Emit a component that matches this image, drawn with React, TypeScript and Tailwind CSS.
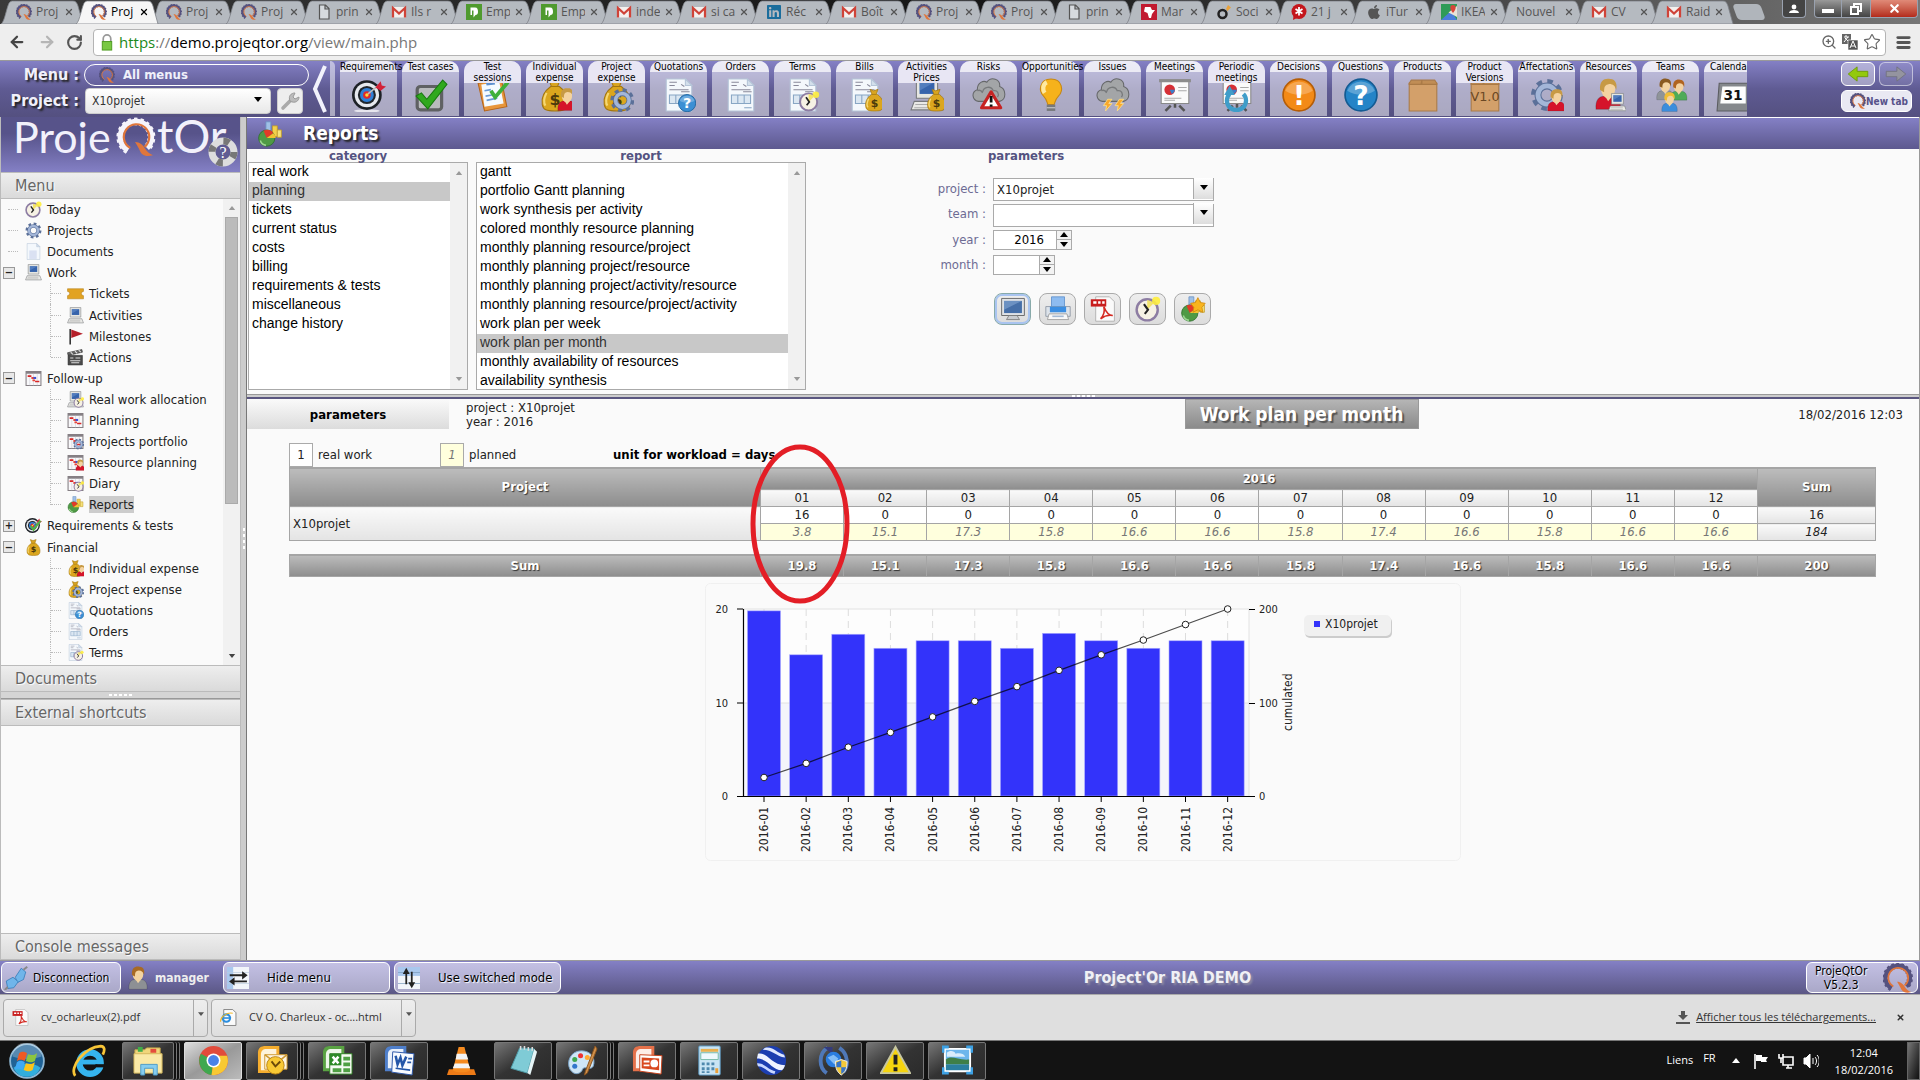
import { useState, type ReactNode } from "react";
import { FaApple, FaLinkedin } from "react-icons/fa";
import { ArrowLeft, ArrowRight, RotateCw, Star, ZoomIn, Menu, X } from "lucide-react";

const SANS = "font-['DejaVu_Sans_Condensed','DejaVu_Sans',sans-serif]";
const UI = "font-['Open_Sans',sans-serif]";

/* ---------- icon parts, all drawn in a 32x32 box ---------- */

const Gear = ({ c = "#a3b6d8", d = "#5b7099" }: { c?: string; d?: string }) => (
  <g>
    <circle cx="16" cy="16" r="12.5" fill="none" stroke={d} strokeWidth="5" strokeDasharray="5 4.8" />
    <circle cx="16" cy="16" r="8.5" fill="none" stroke={d} strokeWidth="6.5" />
    <circle cx="16" cy="16" r="8.5" fill="none" stroke={c} strokeWidth="4.5" />
  </g>
);

const Person = ({ shirt = "#d5142a", hair = "#c79a45" }: { shirt?: string; hair?: string }) => (
  <g>
    <path d="M4 31c-1-9 3-13 8-13h8c5 0 9 4 8 13z" fill={shirt} stroke="#0003" />
    <path d="M13 18l3 5 4-5z" fill="#f2d4a4" />
    <ellipse cx="16" cy="11" rx="7" ry="9" fill="#f4d3a0" />
    <path d="M8 12C7 2 13 0 18 1c6 0 7 6 6 11-1-4-3-6-7-6-4 1-5 2-5 8z" fill={hair} />
  </g>
);

const Clock = () => (
  <g>
    <circle cx="15" cy="17" r="13" fill="#f6f1e4" stroke="#8d7da3" strokeWidth="3" />
    <path d="M15 17V5a12 12 0 0 1 8 4z" fill="#f3e36b" />
    <path d="M11 10l5 7-4 5" fill="none" stroke="#222" strokeWidth="2.6" />
    <circle cx="26" cy="6" r="5" fill="#ffee3d" opacity=".9" />
  </g>
);

const Bag = () => (
  <g>
    <path d="M10 1l5 2 6-2-3 8h-5z" fill="#d9a520" stroke="#a27510" />
    <path d="M12 8h8c7 5 9 11 8 17-1 5-4 6-12 6S5 30 4 25c-1-6 1-12 8-17z" fill="#dba61e" stroke="#a27510" />
    <path d="M8 14c-2 4-3 9-1 12" stroke="#f6d873" strokeWidth="2" fill="none" />
    <text x="16" y="25" fontSize="15" fontWeight="700" textAnchor="middle" fill="#4c3a0c" fontFamily="DejaVu Sans">$</text>
  </g>
);

const Doc = ({ table = true }: { table?: boolean }) => (
  <g>
    <path d="M4 1h18l6 6v24H4z" fill="#f4f8fc" stroke="#b5c5d8" />
    <path d="M22 1v6h6z" fill="#d3dfeb" stroke="#b5c5d8" />
    {table && <path d="M7 4h7M7 7h5M18 6l3 2M7 11h18M18 13h8" stroke="#889" strokeWidth="1" />}
    {table && <path d="M7 16h18v8H7zM13 16v8M19 16v8" fill="#dbe7f2" stroke="#88a6c4" />}
    {table && <path d="M19 28h7" stroke="#88a6c4" />}
  </g>
);

const Pc = () => (
  <g>
    <path d="M6 1h20v18H6z" fill="#e6e6e2" stroke="#77797c" />
    <path d="M9 4h14v11H9z" fill="#3764ac" />
    <path d="M9 4h14L9 12z" fill="#6e96d0" opacity=".5" />
    <path d="M4 22h24l3 8H1z" fill="#e9e9e6" stroke="#77797c" />
    <path d="M5 25h20M4 28h21" stroke="#aaa" />
  </g>
);

const Cloud = () => (
  <g>
    <path d="M6 22c-6-1-7-9-1-11C5 4 11 2 14 4c4-6 13-3 12 4 6 2 7 12 0 14z" fill="#a3a5a7" stroke="#66686a" />
    <path d="M10 13c1-5 8-6 10-1 4-1 6 3 4 6M5 12c2-1 4 0 5 2" fill="none" stroke="#77797b" strokeWidth="1.2" />
  </g>
);

const Board = () => (
  <g>
    <path d="M12 26L7 31M20 26l5 5M16 22v6" stroke="#555" strokeWidth="2.4" />
    <path d="M3 3h26v21H3z" fill="#fafafa" stroke="#888" />
    <path d="M1 1h30v3H1z" fill="#8c8c8c" />
    <circle cx="11" cy="11" r="5" fill="#d62f35" />
    <path d="M11 11h5a5 5 0 0 1-3 4z" fill="#3b7dc8" />
    <path d="M19 9h8M19 12h8M6 19h16M6 21h10" stroke="#aaa" />
  </g>
);

const Plan = () => (
  <g>
    <path d="M2 3h28v26H2z" fill="#f8f8fa" stroke="#857f84" strokeWidth="2" />
    <path d="M2 3h28v4H2z" fill="#857f84" />
    <path d="M9 7v22M16 7v22M23 7v22" stroke="#c9c9d4" />
    <path d="M5 10h7v3H5zM19 20h8v3h-8z" fill="#d82626" />
    <path d="M12 13h5v4h-5zM14 18h5v3h-5z" fill="#e8453a" />
    <path d="M16 13h5v4h-5z" fill="#3a53d8" />
  </g>
);

const Target = () => (
  <g>
    <ellipse cx="14" cy="31" rx="12" ry="1.5" fill="#fff" opacity=".7" />
    <circle cx="14" cy="16" r="14" fill="#1d2126" />
    <circle cx="14" cy="16" r="11.5" fill="#e6e9ee" />
    <circle cx="14" cy="16" r="8.5" fill="#20262c" />
    <circle cx="14" cy="16" r="6.5" fill="#2f7fd6" />
    <circle cx="14" cy="16" r="3.6" fill="#e02a2a" />
    <circle cx="14" cy="16" r="1.6" fill="#ffd83b" />
    <path d="M15 15L25 7" stroke="#bbb" strokeWidth="1.6" />
    <path d="M22 9l5-6 1 4 4 1-5 4z" fill="#d32238" />
  </g>
);

const Carton = () => (
  <g>
    <path d="M3 5h26v26H3z" fill="#d3a06a" stroke="#aa7a46" />
    <path d="M3 5l2-3h10l-1 4H3zM15 2h12l2 3v1H15z" fill="#c08d55" stroke="#aa7a46" />
  </g>
);

const Chart = () => (
  <g>
    <path d="M11 1h6v14h-6z" fill="#9fc0e6" stroke="#6d93c4" />
    <path d="M19 6h6v13h-6z" fill="#f3d14c" stroke="#c29d28" />
    <path d="M25 11h5v9h-5z" fill="#f6e27a" stroke="#c29d28" />
    <circle cx="12" cy="21" r="10" fill="#4f9a45" stroke="#2e6f2c" />
    <path d="M12 21l-4-9c4-2 9-2 12 3z" fill="#e33a28" />
    <path d="M12 21l8-6c2 1 3 4 3 6z" fill="#f2c230" />
    <path d="M4 24a9 9 0 0 0 7 6" stroke="#9fd693" strokeWidth="2" fill="none" />
  </g>
);

const Ball = ({ fill, edge, ch }: { fill: string; edge: string; ch: string }) => (
  <g>
    <circle cx="16" cy="16" r="15" fill={fill} stroke={edge} strokeWidth="1.6" />
    <path d="M3 12a14 14 0 0 1 26 0c-8 5-18 5-26 0z" fill="#fff" opacity=".25" />
    <text x="16" y="25" fontSize="25" fontWeight="700" textAnchor="middle" fill="#fff" fontFamily="DejaVu Sans">{ch}</text>
  </g>
);

const Small = ({ children, x = 15, y = 15, k = 0.54 }: { children: ReactNode; x?: number; y?: number; k?: number }) => (
  <g transform={`translate(${x} ${y}) scale(${k})`}>{children}</g>
);

const QMark = ({ light = false }: { light?: boolean }) => (
  <g>
    <path d="M9 27A13 13 0 1 1 25 25" fill="none" stroke={light ? "#f5f4fb" : "#55527f"} strokeWidth="4.5" />
    <path d="M9 27A13 13 0 1 1 25 25" fill="none" stroke={light ? "#f5f4fb" : "#55527f"} strokeWidth="6.5" strokeDasharray="2.4 2.2" />
    <path d="M11 25A10.6 10.6 0 1 1 23 24" fill="none" stroke="#e0763b" strokeWidth="1.8" />
    <path d="M15 20c4 0 7 3 8 5 2 3 4 5 7 6-7 2-10-1-11-4-1-2-2-4-4-7z" fill="#e0763b" />
  </g>
);

const Gmail = () => (
  <g>
    <path d="M2 6h28v21H2z" fill="#f3f0ee" />
    <path d="M4 27V8l12 11L28 8v19" fill="none" stroke="#cf4338" strokeWidth="4.5" />
  </g>
);

const ICONS: Record<string, ReactNode> = {
  q: <QMark />,
  gmail: <Gmail />,
  page: <path d="M7 2h12l7 7v21H7zM18 2v8h8" fill="#d6dade" stroke="#555" strokeWidth="2.4" />,
  green: <g><path d="M0 0h32v32H0z" fill="#4f9a2e" /><path d="M9 7h9c5 0 6 4 6 9 0 4-2 6-5 6l-4 5V13h-3v9H9z" fill="#fff" /></g>,
  africa: <g><path d="M0 0h32v32H0z" fill="#c11a30" /><path d="M8 6h11l3 6h6l-6 8-2 8h-4l-3-10-7-3z" fill="#fff" /></g>,
  soci: <g><circle cx="13" cy="20" r="8" fill="none" stroke="#222" strokeWidth="5" /><path d="M20 10l4-8 6 5-7 7z" fill="#e8a23c" /></g>,
  red: <g><circle cx="16" cy="15" r="15" fill="#c4161c" /><path d="M5 24l-1 8 8-4z" fill="#c4161c" /><path d="M16 6v17M9 10l14 9M23 10L9 19" stroke="#fff" strokeWidth="3.5" /></g>,
  maps: <g><path d="M0 0h32v32H0z" fill="#2f9b58" /><path d="M0 32L20 14l12 18z" fill="#4a7ddc" /><path d="M15 17L32 4v22z" fill="#e8e3d8" /><path d="M24 18c-8-9-6-16 0-16s8 7 0 16z" fill="#d8453a" /></g>,
  target: <Target />,
  check: <g><rect x="3" y="8" width="23" height="22" rx="3" fill="#b9bbbd" stroke="#5f6163" strokeWidth="3" /><path d="M2 17l5-3 5 6L27 2l4 4-18 23z" fill="#30a91e" stroke="#187a10" /></g>,
  clipboard: <g><path d="M2 5l22-3 5 25-21 4z" fill="#e8963b" stroke="#b4641a" /><path d="M5 6l17-2 4 20-18 3z" fill="#f4faff" /><path d="M9 3l8-1 1 4-8 1z" fill="#5c8fcf" /><path d="M8 12l6-1M9 17l6-1M10 21l10-2" stroke="#6a9ad4" strokeWidth="1.6" /><path d="M14 12l4 6L30 4" fill="none" stroke="#3eb03a" strokeWidth="3.6" /></g>,
  bag: <Bag />,
  bagUser: <g><Bag /><Small x={16} y={9} k={0.7}><Person /></Small></g>,
  bagGear: <g><Bag /><Small x={9} y={9} k={0.75}><Gear /></Small></g>,
  doc: <Doc />,
  docs: <g><Doc table={false} /><path d="M8 14h14v16H8z" fill="#cfd7ee" opacity=".7" /></g>,
  docQ: <g><Doc /><Small><Ball fill="#3b8fd4" edge="#21659f" ch="?" /></Small></g>,
  docClock: <g><Doc /><Small x={12} y={12} k={0.62}><Clock /></Small></g>,
  docBag: <g><Doc /><Small x={14} y={10} k={0.68}><Bag /></Small></g>,
  pc: <Pc />,
  pcBag: <g><Pc /><Small x={14} y={10} k={0.68}><Bag /></Small></g>,
  pcClock: <g><Pc /><Small x={12} y={11} k={0.65}><Clock /></Small></g>,
  risk: <g><Cloud /><path d="M18 13l9 15H9z" fill="#fff" stroke="#c62323" strokeWidth="3" strokeLinejoin="round" /><path d="M18 17v6M18 25v2" stroke="#111" strokeWidth="2.6" /></g>,
  bulb: <g><path d="M16 1c11 0 12 11 7 16-3 3-3 5-4 8h-6c-1-3-1-5-4-8C4 12 5 1 16 1z" fill="#f6b21b" stroke="#c78712" /><path d="M12 4c-4 2-4 7-2 10" stroke="#ffe9a0" strokeWidth="4" fill="none" /><path d="M12 25h8v6h-8z" fill="#77797c" /><path d="M12 28h8" stroke="#ccc" /></g>,
  storm: <g><Cloud /><path d="M11 20l-4 6h3l-1 5 6-7h-3l3-4zM22 20l-4 6h3l-1 5 6-7h-3l3-4z" fill="#f9a72b" stroke="#fbe08a" strokeWidth=".8" /></g>,
  board: <Board />,
  boardCycle: <g><Board /><path d="M9 15a9 9 0 1 0 13 0" fill="none" stroke="#3f9dc9" strokeWidth="4" /><path d="M4 16l5-9 5 9z" fill="#3f9dc9" /></g>,
  excl: <Ball fill="#f38a17" edge="#b45d07" ch="!" />,
  question: <Ball fill="#2484c7" edge="#145b92" ch="?" />,
  box: <Carton />,
  boxV: <g><Carton /><text x="16" y="22" fontSize="12" textAnchor="middle" fill="#6b4824" fontFamily="DejaVu Sans">V1.0</text></g>,
  gear: <Gear />,
  gearUser: <g><Gear /><Small x={14} y={10} k={0.68}><Person /></Small></g>,
  userPc: <g><Small x={0} y={0} k={0.95}><Person /></Small><Small x={15} y={14} k={0.56}><Pc /></Small></g>,
  team: <g><Small x={0} y={0} k={0.66}><Person shirt="#8f9499" hair="#8a5a20" /></Small><Small x={13} y={1} k={0.64}><Person shirt="#4eab58" hair="#b0641f" /></Small><Small x={5} y={13} k={0.6}><Person shirt="#3c8ddc" hair="#f0bd35" /></Small></g>,
  calendar: <g><path d="M3 5h27l2 26H1z" fill="#85888c" stroke="#5b5d60" /><path d="M6 8h22v16H4z" fill="#fdfdfd" /><text x="16" y="21" fontSize="13" fontWeight="700" textAnchor="middle" fill="#111" fontFamily="DejaVu Sans">31</text></g>,
  clock: <Clock />,
  ticket: <path d="M1 7h30v5a4 4 0 0 0 0 8v6H1v-6a4 4 0 0 0 0-8z" fill="#e2a322" stroke="#b27d12" />,
  flag: <g><path d="M6 2v29" stroke="#333" strokeWidth="3" /><path d="M8 3l22 8-22 8z" fill="#b5202a" /></g>,
  clapper: <g><path d="M2 12h27v18H2z" fill="#4b4b4b" stroke="#222" /><path d="M1 7l27-6 1 5-27 6z" fill="#666" stroke="#222" /><path d="M7 6l4 4M15 4l4 4M22 2l4 4M6 17h6M16 17h9M6 22h19M8 26h15" stroke="#ddd" strokeWidth="2" /></g>,
  plan: <Plan />,
  planGear: <g><Plan /><Small x={11} y={10} k={0.68}><Gear /></Small></g>,
  planUser: <g><Plan /><Small x={14} y={10} k={0.68}><Person /></Small></g>,
  planClock: <g><Plan /><Small x={12} y={11} k={0.65}><Clock /></Small></g>,
  chart: <Chart />,
  chartStar: <g><Chart /><path d="M22 2l3 6 6 1-4 5 1 6-6-3-6 3 1-6-4-5 6-1z" fill="#f9b51d" stroke="#d18a0d" /></g>,
  targetCheck: <g><Target /><path d="M11 17l5 7L29 7" fill="none" stroke="#56b043" strokeWidth="4" /></g>,
  screen: <g><path d="M2 3h28v21H2z" fill="#dfe2e6" stroke="#555" /><path d="M5 6h22v15H5z" fill="#466fa8" /><path d="M5 6h22L5 17z" fill="#86a8d4" opacity=".6" /><path d="M11 24h10l3 5H8z" fill="#c9ccd0" stroke="#777" /></g>,
  printer: <g><path d="M8 1h16v13H8z" fill="#8ebcf0" stroke="#5c8fcb" /><path d="M1 13h30v12H1z" fill="#dde3ea" stroke="#8791a0" /><path d="M6 13h20v7H6z" fill="#3b8ee2" /><path d="M5 22h22l2 7H3z" fill="#f8f8f8" stroke="#999" /><path d="M9 25h14" stroke="#a3b9d4" strokeWidth="2" /></g>,
  pdf: <g><path d="M7 1h17l6 6v24H7z" fill="#fafafa" stroke="#a9a9a9" /><path d="M1 4h19v9H1z" fill="#c81e1e" /><path d="M13 28c5-5 5-11 4-15 3 8 6 11 11 11-6-1-11 1-15 4z" fill="none" stroke="#d42a22" strokeWidth="2" /><path d="M4 8h4M10 8h3M15 8h3" stroke="#fff" strokeWidth="3" /></g>,
  plug: <g><path d="M15 15l8-12 6 5-3 10-8 4z" fill="#70b5ea" stroke="#2f77b5" /><path d="M26 5l5-4" stroke="#888" strokeWidth="2.6" /><path d="M3 20l9-5 7 6-6 8-8 1z" fill="#70b5ea" stroke="#2f77b5" /><path d="M5 28l-4 4" stroke="#888" strokeWidth="2.6" /></g>,
  manager: <Person shirt="#8d9094" hair="#a86a24" />,
  hmove: <g><path d="M0 0h32v32H0z" fill="#f2f5fa" /><path d="M0 0h9v32H0z" fill="#a9c8ee" /><path d="M0 8h32M0 24h32" stroke="#bcd" /><path d="M4 12h20M9 21h20" stroke="#222" strokeWidth="2.6" /><path d="M22 6l8 6-8 6zM11 15l-8 6 8 6z" fill="#222" /></g>,
  vmove: <g><path d="M0 0h32v32H0z" fill="#f2f5fa" /><path d="M0 0h32v13H0z" fill="#a9c8ee" /><path d="M0 8h32M0 24h32" stroke="#79b" /><path d="M12 7v18M20 7v18" stroke="#222" strokeWidth="2.6" /><path d="M7 10l5-9 5 9zM15 22l5 9 5-9z" fill="#222" /></g>,
  htmlFile: <g><path d="M7 1h17l6 6v24H7z" fill="#fbfbfb" stroke="#777" strokeWidth="1.6" /><circle cx="12" cy="17" r="7" fill="none" stroke="#2c8ede" strokeWidth="4" /><path d="M7 17h12" stroke="#2c8ede" strokeWidth="3" /><path d="M1 24C0 15 14 5 24 8" stroke="#f2b928" strokeWidth="2" fill="none" /></g>,
  win: <g><circle cx="16" cy="16" r="15" fill="#1f6296" stroke="#8fb8d4" strokeWidth="1.6" /><path d="M4 22a13 13 0 0 0 24 0c-7-5-17-5-24 0z" fill="#37c2ef" opacity=".8" /><path d="M3 12a13 13 0 0 1 26 0c-8 3-18 3-26 0z" fill="#fff" opacity=".25" /><path d="M9 9c3-2 5-1 7 0l-2 7c-2-1-4-2-7 0z" fill="#ee5a24" /><path d="M17 10c3 1 5 1 8-1l-2 7c-3 2-5 1-8 0z" fill="#8cc63e" /><path d="M7 17c3-2 5-1 7 0l-2 7c-2-1-4-2-7 0z" fill="#3fa9f5" /><path d="M15 18c3 1 5 1 8-1l-2 7c-3 2-5 1-8 0z" fill="#fcc419" /></g>,
  ie: <g><circle cx="17" cy="18" r="10" fill="none" stroke="#35b4ee" strokeWidth="6" /><path d="M9 17h18" stroke="#35b4ee" strokeWidth="4.5" /><path d="M22 22h9v-3h-9z" fill="#131313" /><path d="M3 30C-3 22 12 3 27 2c4 0 4 4 2 8" stroke="#f8c537" strokeWidth="2.6" fill="none" /></g>,
  folder: <g><path d="M2 5h10l2-2h14v24H2z" fill="#f1d67b" stroke="#c9a94a" /><path d="M5 2h5v5H5z" fill="#3fae49" /><path d="M18 4h6v4h-6z" fill="#e44d3c" /><path d="M1 9h29v20H1z" fill="#fae9a6" stroke="#d3b65c" /><path d="M8 31V20h17v11h-4v-7h-9v7z" fill="#85cdf0" stroke="#4d9cc8" /></g>,
  chrome: <g><circle cx="16" cy="16" r="15" fill="#e14b3b" /><path d="M16 16L3 9a15 15 0 0 0 11 22z" fill="#3fa84f" /><path d="M16 16l-2 15A15 15 0 0 0 30 11H16z" fill="#f8c932" /><circle cx="16" cy="16" r="7.2" fill="#fff" /><circle cx="16" cy="16" r="5.6" fill="#4a82e8" /></g>,
  outlook: <g><path d="M1 29V8c0-5 3-7 8-7h14v28z" fill="#f5ad2e" /><path d="M4 26V10c0-4 2-6 6-6h10v22z" fill="#fdf3dc" /><path d="M8 10h23v15H8z" fill="#fdf6e3" stroke="#cf9a34" /><path d="M8 10l12 9 11-9" fill="none" stroke="#cf9a34" strokeWidth="1.6" /><circle cx="19" cy="21" r="9" fill="#f8c934" stroke="#b98314" /><path d="M15 17l4 5 5-5" stroke="#6a4a09" strokeWidth="2" fill="none" /></g>,
  excel: <g><path d="M1 27V8c0-5 3-7 8-7h14v26z" fill="#5aa343" /><path d="M4 24V10c0-4 2-6 6-6h10v20z" fill="#eef7ea" /><path d="M8 9h23v21H8z" fill="#f6fbf3" stroke="#2d7d22" /><path d="M8 9l12 0v12H8z" fill="#2d8a27" /><path d="M11 12l6 7M17 12l-6 7" stroke="#fff" strokeWidth="2.6" /><path d="M22 12h7v4h-7zM22 18h7v4h-7zM22 24h7v4h-7zM11 24h9v4h-9z" fill="#4fa044" /></g>,
  word: <g><path d="M1 27V8c0-5 3-7 8-7h14v26z" fill="#4f7fcb" /><path d="M4 24V10c0-4 2-6 6-6h10v20z" fill="#eaf1fb" /><path d="M9 7l22 2-2 22-21-3z" fill="#f8fbff" stroke="#2d58a8" /><path d="M12 11l2 9 3-7 2 8 4-9" fill="none" stroke="#2456a8" strokeWidth="2.6" /><path d="M25 14h4M24 18h4M12 24l15 2" stroke="#2456a8" strokeWidth="1.8" /></g>,
  vlc: <g><path d="M3 25h26l2 6H1z" fill="#ee7b17" /><path d="M13 2h6l6 24c-4 3-14 3-18 0z" fill="#f58a1e" /><path d="M11 9h10l2 6H10zM9 19h14l2 5H7z" fill="#f3f3f3" /></g>,
  notepad: <g><path d="M12 3l15 1-7 25L3 24z" fill="#7fcbd6" stroke="#4f9ca8" /><path d="M27 4l3 3-7 24-3-2z" fill="#e6f5f7" /><path d="M13 1v4M17 1v4M21 2v4M25 2v4" stroke="#ddd" strokeWidth="1.6" /></g>,
  paint: <g><path d="M15 6C4 6-1 17 3 25c5 8 12 4 13 0 2-4 8 2 11-3C30 14 25 6 15 6z" fill="#cfe6f6" stroke="#7aa4c8" /><circle cx="8" cy="15" r="2.6" fill="#3fa84f" /><circle cx="14" cy="11" r="2.6" fill="#e33" /><circle cx="21" cy="13" r="2.6" fill="#fa3" /><circle cx="8" cy="22" r="2.6" fill="#37c" /><path d="M29 1l2 3-10 25-3 2 1-4z" fill="#d0904a" stroke="#8a5520" /></g>,
  ppt: <g><path d="M1 27V8c0-5 3-7 8-7h14v26z" fill="#e5714a" /><path d="M4 24V10c0-4 2-6 6-6h10v20z" fill="#fdeee8" /><path d="M8 10l23 1-1 19-22-3z" fill="#fff" stroke="#c9431c" /><path d="M10 13l18 1v12l-18-2z" fill="#d9481f" /><circle cx="23" cy="19" r="4" fill="#fff" /><path d="M12 17h6M12 21h6" stroke="#fff" strokeWidth="2" /></g>,
  calc: <g><rect x="5" y="1" width="22" height="30" rx="1" fill="#c9e4f4" stroke="#5e9cc4" /><path d="M7 4h18v3H7z" fill="#eab04e" /><path d="M7 8h18v7H7z" fill="#eef8fd" stroke="#7ba" /><path d="M8 18h3v3H8zM13 18h3v3h-3zM18 18h3v3h-3zM8 23h3v3H8zM13 23h3v3h-3zM18 23h3v3h-3zM8 27h3v2H8zM13 27h3v2h-3z" fill="#4f88ad" /><path d="M22 24h3v5h-3z" fill="#e9a03a" /></g>,
  earth: <g><circle cx="16" cy="16" r="15" fill="#1c3eb0" /><path d="M2 9c10-2 14 12 28 12-1 3-2 4-3 5C16 26 13 14 1 14z" fill="#f0f4ff" /><path d="M9 3c9-2 13 6 20 7l1 3C21 12 17 5 7 5z" fill="#dfe8ff" /><path d="M1 19c7-1 12 7 19 8l-1 3C12 28 8 22 2 22z" fill="#c9d8ff" /></g>,
  sync: <g><path d="M10 3C1 8 0 23 9 29M22 3c9 6 10 18 4 25" fill="none" stroke="#4f78b8" strokeWidth="4" /><path d="M6 2h9v8z" fill="#343b7c" /><circle cx="16" cy="15" r="8" fill="#2b7de0" /><path d="M10 13l6-3 5 4-4 6z" fill="#a9d7ff" opacity=".7" /><path d="M18 17l6-2 6 2c0 8-2 11-6 14-4-3-6-6-6-14z" fill="#f4c938" stroke="#eee" /><path d="M24 16v7h5c-1 4-3 6-5 7v-7h-5c0-2 0-4 0-5z" fill="#3674c9" /></g>,
  warn: <g><path d="M16 2l15 27H1z" fill="#f6d50f" stroke="#c7c7a0" strokeWidth="2" /><path d="M16 10v10M16 23v4" stroke="#222" strokeWidth="4" /></g>,
  picture: <g><path d="M3 4h26v23H3z" fill="#cfeafd" stroke="#fff" strokeWidth="2" /><path d="M4 5h24v11H4z" fill="#6db6ec" /><path d="M5 8c3-3 8-2 9 1 5-1 8 0 10 3H5z" fill="#f4faff" opacity=".8" /><path d="M4 15c6-5 12 1 24 0v5H4z" fill="#3f7f47" /><path d="M4 20h24v6H4z" fill="#2b7f9f" /><path d="M1 8V2h6M25 2h6v6M31 23v6h-6M7 29H1v-6" fill="none" stroke="#3da1e4" strokeWidth="3" /></g>,
};

const Ic = ({ n, className = "size-4" }: { n: string; className?: string }) => (
  <svg viewBox="0 0 32 32" className={`shrink-0 ${className}`} aria-hidden="true">{ICONS[n]}</svg>
);

/* ---------- data ---------- */

const tabs: [string, string][] = [
  ["q", "Proj"], ["q", "Proj"], ["q", "Proj"], ["q", "Proj"], ["page", "prin"], ["gmail", "Ils r"],
  ["green", "Emp"], ["green", "Emp"], ["gmail", "inde"], ["gmail", "si ca"], ["linkedin", "Réc"], ["gmail", "Boît"],
  ["q", "Proj"], ["q", "Proj"], ["page", "prin"], ["africa", "Mar"], ["soci", "Soci"], ["red", "21 j"],
  ["apple", "iTur"], ["maps", "IKEA"], ["", "Nouvel"], ["gmail", "CV"], ["gmail", "Raid"],
];

const tiles: [string, string][] = [
  ["Requirements", "target"], ["Test cases", "check"], ["Test\nsessions", "clipboard"], ["Individual\nexpense", "bagUser"],
  ["Project\nexpense", "bagGear"], ["Quotations", "docQ"], ["Orders", "doc"], ["Terms", "docClock"], ["Bills", "docBag"],
  ["Activities\nPrices", "pcBag"], ["Risks", "risk"], ["Opportunities", "bulb"], ["Issues", "storm"], ["Meetings", "board"],
  ["Periodic\nmeetings", "boardCycle"], ["Decisions", "excl"], ["Questions", "question"], ["Products", "box"],
  ["Product\nVersions", "boxV"], ["Affectations", "gearUser"], ["Resources", "userPc"], ["Teams", "team"], ["Calendars", "calendar"],
];

// level 0 = root entry, level 1 = child entry
const tree: { label: string; icon: string; level: number; sign?: string; last?: boolean }[] = [
  { label: "Today", icon: "clock", level: 0 },
  { label: "Projects", icon: "gear", level: 0 },
  { label: "Documents", icon: "docs", level: 0 },
  { label: "Work", icon: "pc", level: 0, sign: "-" },
  { label: "Tickets", icon: "ticket", level: 1 },
  { label: "Activities", icon: "pc", level: 1 },
  { label: "Milestones", icon: "flag", level: 1 },
  { label: "Actions", icon: "clapper", level: 1, last: true },
  { label: "Follow-up", icon: "plan", level: 0, sign: "-" },
  { label: "Real work allocation", icon: "pcClock", level: 1 },
  { label: "Planning", icon: "plan", level: 1 },
  { label: "Projects portfolio", icon: "planGear", level: 1 },
  { label: "Resource planning", icon: "planUser", level: 1 },
  { label: "Diary", icon: "planClock", level: 1 },
  { label: "Reports", icon: "chart", level: 1, last: true },
  { label: "Requirements & tests", icon: "targetCheck", level: 0, sign: "+" },
  { label: "Financial", icon: "bag", level: 0, sign: "-" },
  { label: "Individual expense", icon: "bagUser", level: 1 },
  { label: "Project expense", icon: "bagGear", level: 1 },
  { label: "Quotations", icon: "docQ", level: 1 },
  { label: "Orders", icon: "doc", level: 1 },
  { label: "Terms", icon: "docClock", level: 1 },
];

const categories = ["real work", "planning", "tickets", "current status", "costs", "billing", "requirements & tests", "miscellaneous", "change history"];
const reports = [
  "gantt", "portfolio Gantt planning", "work synthesis per activity", "colored monthly resource planning",
  "monthly planning resource/project", "monthly planning project/resource", "monthly planning project/activity/resource",
  "monthly planning resource/project/activity", "work plan per week", "work plan per month",
  "monthly availability of resources", "availability synthesis",
];

const months = ["01", "02", "03", "04", "05", "06", "07", "08", "09", "10", "11", "12"];
const real = [16, 0, 0, 0, 0, 0, 0, 0, 0, 0, 0, 0];
const planned = [3.8, 15.1, 17.3, 15.8, 16.6, 16.6, 15.8, 17.4, 16.6, 15.8, 16.6, 16.6];
const totals = planned.map((p, i) => p + real[i]);

/* ---------- browser ---------- */

function TabStrip() {
  return (
    <div className={`flex h-6 overflow-hidden bg-linear-to-r from-[#3a3a3a] via-[#151515] to-[#777] text-xs text-[#555] ${UI}`}>
      {tabs.map(([icon, label], i) => (
        <div key={i} className={`relative flex w-[75px] shrink-0 items-center pl-4 ${i === 1 ? "z-10 text-black" : ""}`}>
          <svg viewBox="0 0 84 24" className="absolute top-0 left-0 h-6 w-[84px]" aria-hidden="true">
            <path d="M1 24C5 22 7 4 10 2c1-1 2-1 3-1h60c3 0 4 2 5 5l5 18z" fill={i === 1 ? "#f6f6f6" : "#b5bac0"} stroke="#7d8288" strokeWidth=".8" />
          </svg>
          <a href="#" className="relative flex items-center">
            {icon === "linkedin" && <FaLinkedin className="mr-1 size-4 text-[#1a6d9c]" />}
            {icon === "apple" && <FaApple className="mr-1 size-4" />}
            {ICONS[icon] && <Ic n={icon} className="mr-1 size-4" />}
            <span className={`overflow-hidden whitespace-nowrap ${icon ? "w-6" : "w-11"}`}>{label}</span>
          </a>
          <button aria-label="Close tab" className="relative ml-1"><X size={10} strokeWidth={3} /></button>
        </div>
      ))}
      <div className="mt-1 ml-[10px] h-4 w-7 shrink-0 -skew-x-[-20deg] rounded-sm bg-[#b0b5bb]" />
      <div className="ml-auto flex h-[18px] shrink-0 text-white">
        <button aria-label="User" className="mr-2 flex w-6 items-center justify-center rounded-b border border-t-0 border-gray-400 bg-[#444]">
          <svg viewBox="0 0 12 12" className="size-3" fill="#fff"><circle cx="6" cy="4" r="2.4" /><path d="M1 10c0-4 10-4 10 0z" /></svg>
        </button>
        <button aria-label="Minimize" className="flex w-7 items-end justify-center rounded-bl border border-t-0 border-gray-400 bg-linear-to-b from-[#999] to-[#444] pb-1"><span className="h-1 w-3 bg-white" /></button>
        <button aria-label="Restore" className="flex w-7 items-center justify-center border-b border-gray-400 bg-linear-to-b from-[#999] to-[#444]">
          <svg viewBox="0 0 12 12" className="size-3" fill="none" stroke="#fff" strokeWidth="2"><path d="M4 3V1h7v7H9M1 4h7v7H1z" /></svg>
        </button>
        <button aria-label="Close" className="mr-[2px] flex w-12 items-center justify-center rounded-br border border-t-0 border-gray-400 bg-linear-to-b from-[#e08a78] to-[#b3291a]"><X size={13} strokeWidth={4} /></button>
      </div>
    </div>
  );
}

function AddressBar() {
  return (
    <div className="flex h-[37px] items-center border-b border-[#999] bg-[#eee] pr-2 pl-2 text-[#555]">
      <button aria-label="Back" className="mr-3 text-[#444]"><ArrowLeft size={18} strokeWidth={3} /></button>
      <button aria-label="Forward" className="mr-[10px] text-[#b5b5b5]"><ArrowRight size={18} strokeWidth={3} /></button>
      <button aria-label="Reload" className="mr-[10px]"><RotateCw size={17} strokeWidth={3} /></button>
      <div className={`flex h-[27px] flex-1 items-center rounded-sm border border-[#b4b4b4] bg-white pr-1 pl-[5px] text-[15px] text-[#777] ${UI}`}>
        <svg viewBox="0 0 16 18" className="mr-1 h-[17px] w-4" aria-hidden="true">
          <path d="M4 9V5a4 4 0 0 1 8 0v4" fill="none" stroke="#999" strokeWidth="1.8" />
          <rect x="3" y="8" width="10" height="9" fill="#79c843" stroke="#4c9a1f" />
        </svg>
        <span className="text-[#1b8a1b]">https</span>://<span className="text-black">demo.projeqtor.org</span>/view/main.php
        <div className="ml-auto flex items-center gap-[5px] text-[#666]">
          <ZoomIn size={16} />
          <svg viewBox="0 0 16 16" className="size-4" aria-hidden="true">
            <path d="M0 0h9v10H0z" fill="#666" /><path d="M2 3h5M4 1v2M6 3L2 8M3 4l4 4" stroke="#fff" fill="none" />
            <path d="M6 6h10v10H6z" fill="#555" stroke="#fff" strokeWidth=".6" /><path d="M8 14l3-7 3 7M9 12h4" stroke="#fff" fill="none" />
          </svg>
          <Star size={18} strokeWidth={1.5} />
        </div>
      </div>
      <button aria-label="Browser menu" className="ml-[9px]"><Menu size={17} strokeWidth={4} /></button>
    </div>
  );
}

/* ---------- application header ---------- */

function MenuBar() {
  return (
    <header className="flex h-14 items-start bg-linear-to-b from-[#8480c5] via-[#5f5b93] to-[#545080]">
      <div className="flex w-[335px] shrink-0">
        <div className="w-[310px] font-bold text-[#f0f0fa]">
          <div className="mt-[2px] flex items-center">
            <span className="w-[79px] text-right text-base leading-6 whitespace-nowrap [text-shadow:2px_2px_2px_#222]">Menu :</span>
            <button className="ml-[5px] flex h-[22px] w-[225px] items-center rounded-full border border-white pl-[14px] text-[13px]">
              <Ic n="q" className="mr-2 size-4" />All menus
            </button>
          </div>
          <div className="mt-px flex items-center">
            <label htmlFor="project" className="w-[79px] text-right text-base leading-6 whitespace-nowrap [text-shadow:2px_2px_2px_#222]">Project :</label>
            <div className="relative ml-[6px]">
              <select id="project" className="h-[26px] w-[186px] appearance-none rounded border border-[#ccc] bg-linear-to-b from-white to-[#e8e8e8] pl-[6px] text-xs font-normal text-[#333]">
                <option>X10projet</option>
              </select>
              <svg viewBox="0 0 8 5" className="pointer-events-none absolute top-[9px] right-[9px] h-[5px] w-2"><path d="M0 0h8L4 5z" /></svg>
            </div>
            <button aria-label="Settings" className="ml-[6px] flex size-[26px] items-center justify-center rounded border border-[#ccc] bg-[#eee]">
              <svg viewBox="0 0 20 20" className="size-5"><path d="M3 17L11 9" stroke="#aaa" strokeWidth="3.6" strokeLinecap="round" /><path d="M10 10C8 5 11 2 15 2l-2 4 2 2 4-2c0 4-4 7-9 4z" fill="#bbb" stroke="#999" /></svg>
            </button>
          </div>
        </div>
        <button aria-label="Scroll left" className="mt-[1px]">
          <svg viewBox="0 0 18 50" className="h-[50px] w-[18px]"><path d="M15 2L5 25l10 23" fill="none" stroke="#f2f2fc" strokeWidth="4" /></svg>
        </button>
        <div className="ml-[2px] h-[55px] w-[5px] rounded-tr-lg bg-white/50" />
      </div>
      <nav className="ml-[5px] flex min-w-0 flex-1 gap-[5px] overflow-hidden">
        {tiles.map(([label, icon]) => {
          const two = label.includes("\n");
          return (
            <a href="#" key={label} className="flex h-[55px] w-[57px] shrink-0 flex-col items-center rounded-t-[10px] bg-white/50">
              <span className={`relative w-full rounded-t-[10px] text-center text-[10px] leading-[11px] whitespace-pre text-black ${two ? "z-10 h-[22px] bg-[#e8e6f4]" : "h-[11px] bg-white/70"}`}>{label}</span>
              <Ic n={icon} className={two ? "-mt-[5px] size-[34px]" : "mt-[6px] size-[34px]"} />
            </a>
          );
        })}
      </nav>
      <div className="ml-[94px] flex w-[79px] shrink-0 flex-wrap gap-x-1 gap-y-1 pt-[1px]">
        <button aria-label="Previous" className="flex h-6 w-[34px] items-center justify-center rounded-md border border-white bg-white/40">
          <svg viewBox="0 0 24 18" className="h-4 w-6"><path d="M1 9l10-8v5h12v6H11v5z" fill="#93c90e" stroke="#6d9a08" /></svg>
        </button>
        <button aria-label="Next" className="flex h-6 w-[34px] items-center justify-center rounded-md border border-white/50 bg-white/10">
          <svg viewBox="0 0 24 18" className="h-4 w-6"><path d="M23 9L13 1v5H1v6h12v5z" fill="#94949f" stroke="#72727e" /></svg>
        </button>
        <button className="flex h-[22px] w-[71px] items-center rounded-md border border-white bg-[#e9e9f3] pl-2 text-[10px] font-bold whitespace-nowrap text-[#56528a]">
          <Ic n="q" className="size-4" />New tab
        </button>
      </div>
    </header>
  );
}

/* ---------- left column ---------- */

const PaneTitle = ({ children }: { children: ReactNode }) => (
  <h2 className="h-[27px] border-y border-[#bbb] bg-linear-to-b from-[#eee] to-[#dadada] pl-[14px] text-base leading-[26px] text-[#666] [text-shadow:1px_1px_1px_#fff]">{children}</h2>
);

function Sidebar() {
  return (
    <aside className="flex w-[241px] shrink-0 flex-col border-x border-[#bbb]">
      <div className="relative h-[55px] bg-linear-to-b from-[#57538a] from-30% to-[#8480c5]">
        <svg viewBox="0 0 240 55" className="h-[55px] w-[240px]" role="img" aria-label="ProjeQtOr">
          <g fontFamily="Lato" fontSize="43" fill="#f2f1fb">
            <text x="12" y="36">Proje</text>
            <text x="156" y="36" fontSize="46">tOr</text>
          </g>
          <g transform="translate(116 1) scale(1.2)"><QMark light /></g>
          <circle cx="222" cy="35" r="11" fill="#5f5b93" stroke="#ddd" strokeWidth="7" />
          <circle cx="222" cy="35" r="11" fill="none" stroke="#777" strokeWidth="7" strokeDasharray="6 11.3" />
          <text x="222" y="41" fontSize="16" textAnchor="middle" fill="#fff" fontFamily="Liberation Serif">?</text>
        </svg>
      </div>
      <PaneTitle>Menu</PaneTitle>
      <div className="flex h-[466px] text-[13px] text-[#222]">
        <ul className="flex min-w-0 flex-1 flex-col pb-[2px] leading-[17px]">
          {tree.map((t) => (
            <li key={t.label + t.icon} className="relative flex flex-1 items-center">
              {t.level === 1 && <span className={`absolute top-0 left-[49px] border-l border-dotted border-[#bbb] ${t.last ? "h-1/2" : "h-full"}`} />}
              {t.level === 1 && <span className="ml-[50px] w-[10px] border-t border-dotted border-[#bbb]" />}
              {t.level === 0 && !t.sign && <span className="mr-[7px] ml-[7px] w-[10px] border-t border-dotted border-[#bbb]" />}
              {t.sign && <button aria-label={`Toggle ${t.label}`} className="mr-[10px] ml-[2px] flex size-3 items-center justify-center border border-[#999] bg-[#e8e8e8] text-[11px] leading-none font-bold">{t.sign === "-" ? "−" : "+"}</button>}
              <Ic n={t.icon} className={t.level ? "ml-[6px] size-[17px]" : "size-[17px]"} />
              <a href="#" className={`ml-[5px] whitespace-nowrap ${t.label === "Reports" ? "bg-[#ccc]" : ""}`}>{t.label}</a>
            </li>
          ))}
        </ul>
        <div className="flex w-[17px] flex-col items-center bg-[#f1f1f1]">
          <svg viewBox="0 0 8 5" className="my-[7px] h-1 w-2"><path d="M0 5h8L4 0z" fill="#999" /></svg>
          <div className="h-[287px] w-[13px] border border-[#aaa] bg-[#bbb]" />
          <svg viewBox="0 0 8 5" className="mt-auto mb-[7px] h-1 w-2"><path d="M0 0h8L4 5z" fill="#444" /></svg>
        </div>
      </div>
      <PaneTitle>Documents</PaneTitle>
      <div className="flex h-[7px] items-center justify-center gap-[2px] border-b border-[#999] bg-[#d5d5d5]">
        {[0, 1, 2, 3, 4].map((i) => <span key={i} className="h-[2px] w-[3px] bg-white" />)}
      </div>
      <PaneTitle>External shortcuts</PaneTitle>
      <div className="flex-1 bg-[#fafafa]" />
      <PaneTitle>Console messages</PaneTitle>
    </aside>
  );
}

/* ---------- report selection ---------- */

function ListBox({ label, items, value, width }: { label: string; items: string[]; value: string; width: string }) {
  const [current, setCurrent] = useState(value);
  return (
    <div className={width}>
      <label htmlFor={label} className="block h-[13px] text-center text-[13px] leading-[14px] font-bold text-[#545381]">{label}</label>
      <div className="flex h-[228px] border border-[#aaa] bg-white">
        <select id={label} size={12} value={current} onChange={(e) => setCurrent(e.target.value)} className="min-w-0 flex-1 appearance-none overflow-hidden font-['Liberation_Sans',sans-serif] text-sm text-black outline-none">
          {items.map((it) => <option key={it} className="h-[19px] px-[3px] py-0 leading-[19px] checked:bg-[#c8c8c8] checked:text-[#333]">{it}</option>)}
        </select>
        <div className="flex w-[17px] flex-col items-center justify-between bg-[#f1f1f1] py-[8px]">
          <svg viewBox="0 0 8 5" className="h-1 w-2"><path d="M0 5h8L4 0z" fill="#999" /></svg>
          <svg viewBox="0 0 8 5" className="h-1 w-2"><path d="M0 0h8L4 5z" fill="#999" /></svg>
        </div>
      </div>
    </div>
  );
}

const Combo = ({ id, value }: { id: string; value: string }) => (
  <div className="relative w-[221px]">
    <select id={id} className="h-[23px] w-full appearance-none border border-[#aaa] bg-white pl-[3px] text-[13px] text-[#222]"><option>{value}</option></select>
    <span className="pointer-events-none absolute top-px right-px flex h-[21px] w-5 justify-center border-l border-[#aaa] bg-linear-to-b from-white to-[#ddd] pt-[7px]">
      <svg viewBox="0 0 8 5" className="h-[5px] w-2"><path d="M0 0h8L4 5z" /></svg>
    </span>
  </div>
);

const Spinner = ({ id, value, width }: { id: string; value: string; width: string }) => (
  <div className={`flex h-5 border border-[#aaa] bg-white ${width}`}>
    <input id={id} defaultValue={value} className="min-w-0 flex-1 pr-3 text-right text-[13px] text-black outline-none" />
    <div className="flex w-[15px] flex-col border-l border-[#aaa] bg-[#f3f3f3]">
      <button type="button" aria-label={`Increase ${id}`} className="flex flex-1 items-center justify-center border-b border-[#aaa]"><svg viewBox="0 0 8 5" className="h-[5px] w-2"><path d="M0 5h8L4 0z" /></svg></button>
      <button type="button" aria-label={`Decrease ${id}`} className="flex flex-1 items-center justify-center"><svg viewBox="0 0 8 5" className="h-[5px] w-2"><path d="M0 0h8L4 5z" /></svg></button>
    </div>
  </div>
);

function ReportPicker() {
  const lab = "w-[93px] pr-[7px] text-right text-[13px] leading-5 text-[#6d6b94]";
  return (
    <section className="flex h-[245px] bg-[#fafafa] pl-[1px]">
      <ListBox label="category" items={categories} value="planning" width="w-[220px]" />
      <ListBox label="report" items={reports} value="work plan per month" width="ml-2 w-[330px]" />
      <form className="ml-[94px] w-[320px]">
        <h3 className="h-[13px] pl-[88px] text-[13px] leading-[14px] font-bold text-[#545381]">parameters</h3>
        <div className="mt-[15px] flex items-center"><label htmlFor="p-project" className={lab}>project :</label><Combo id="p-project" value="X10projet" /></div>
        <div className="mt-px flex items-center"><label htmlFor="team" className={lab}>team :</label><Combo id="team" value="" /></div>
        <div className="mt-[3px] flex items-center"><label htmlFor="year" className={lab}>year :</label><Spinner id="year" value="2016" width="w-[79px]" /></div>
        <div className="mt-[5px] flex items-center"><label htmlFor="month" className={lab}>month :</label><Spinner id="month" value="" width="w-[62px]" /></div>
        <div className="mt-[18px] ml-[94px] flex gap-2">
          {["screen", "printer", "pdf", "clock", "chartStar"].map((n, i) => (
            <button key={n} type="button" aria-label={n} className={`flex h-8 w-[37px] shrink-0 items-center justify-center rounded-lg border bg-linear-to-b from-[#eee] to-[#dcdcdc] ${i === 0 ? "border-[#8aa] ring-2 ring-[#a9c4f0] ring-inset" : "border-[#aaa]"}`}>
              <Ic n={n} className="size-[26px]" />
            </button>
          ))}
        </div>
      </form>
    </section>
  );
}

/* ---------- report ---------- */

function WorkTable() {
  const head = "border border-[#a5a5a5] bg-linear-to-b from-[#bdbdbd] to-[#8d8d8d] font-bold text-white [text-shadow:1px_1px_1px_#333]";
  const light = "border border-[#a5a5a5] bg-linear-to-b from-[#fafafa] to-[#e4e4e4]";
  return (
    <table className="w-full table-fixed border-collapse text-center text-[13px] leading-4 text-[#222]">
      <colgroup>
        <col className="w-[471px]" />
        {months.map((m) => <col key={m} />)}
        <col className="w-[118px]" />
      </colgroup>
      <thead>
        <tr className="h-[22px]">
          <th rowSpan={2} className={head}>Project</th>
          <th colSpan={12} className={head}>2016</th>
          <th rowSpan={2} className={head}>Sum</th>
        </tr>
        <tr className="h-[17px]">
          {months.map((m, i) => (
            <td key={m} className={`relative ${light}`}>
              {m}
              {i === 0 && (
                <svg viewBox="0 0 100 162" className="pointer-events-none absolute -top-[47px] -left-[11px] z-10 h-[162px] w-[100px] max-w-none" aria-hidden="true">
                  <ellipse cx="50" cy="81" rx="47" ry="77" fill="none" stroke="#e31e26" strokeWidth="5" />
                </svg>
              )}
            </td>
          ))}
        </tr>
      </thead>
      <tbody>
        <tr className="h-[17px]">
          <td rowSpan={2} className={`pl-[3px] text-left ${light}`}>X10projet</td>
          {real.map((v, i) => <td key={i} className="border border-[#a5a5a5] bg-white">{v}</td>)}
          <td className={light}>16</td>
        </tr>
        <tr className="h-[17px] italic">
          {planned.map((v, i) => <td key={i} className="border border-[#a5a5a5] bg-[#ffffdd] text-[#777]">{v}</td>)}
          <td className={light}>184</td>
        </tr>
        <tr className="h-[14px]"><td colSpan={14} /></tr>
        <tr className="h-[22px]">
          <th className={head}>Sum</th>
          {totals.map((v, i) => <th key={i} className={head}>{v.toFixed(1)}</th>)}
          <th className={head}>200</th>
        </tr>
      </tbody>
    </table>
  );
}

function WorkChart() {
  const base = 213;
  let sum = 0;
  const pts = totals.map((v, i) => {
    sum += v;
    return [59 + i * 42.15, base - sum * 0.935];
  });
  return (
    <svg viewBox="0 0 756 278" className="mx-auto mt-[6px] h-[278px] w-[756px]" role="img" aria-label="Work plan chart" fontFamily="DejaVu Sans Condensed, DejaVu Sans" fontSize="12" fill="#222">
      <rect x=".5" y=".5" width="755" height="277" rx="5" fill="#fafafa" stroke="#f0f0f0" />
      <rect x="38" y="26" width="506" height="94" fill="#fdfdfd" />
      <rect x="38" y="120" width="506" height="93" fill="#f4f5fa" />
      <path d="M38 26h506v187M38 120h506" fill="none" stroke="#e2e2e2" />
      {pts.map(([x]) => <path key={x} d={`M${x} 26v187`} stroke="#ddd" strokeDasharray="7 5" />)}
      {totals.map((v, i) => (
        <rect key={i} x={42.5 + i * 42.15} y={base - v * 9.35} width="33" height={v * 9.35} fill="#3333fa" stroke="#a9a9ff" strokeWidth=".6" />
      ))}
      <path d="M38.500 26v187M32 26h6M32 120h6M32 213.500h518M544 26.500h6M544 120.500h6" stroke="#000" strokeWidth="1.2" fill="none" />
      <polyline points={pts.map((p) => p.join(",")).join(" ")} fill="none" stroke="#000" strokeOpacity=".7" strokeWidth="1.2" />
      {pts.map(([x, y], i) => (
        <g key={i}>
          <circle cx={x} cy={y} r="3.3" fill="#fff" stroke="#222" />
          <path d={`M${x} 213v6`} stroke="#000" />
          <text transform={`translate(${x + 4} 269) rotate(-90)`}>{`2016-${months[i]}`}</text>
        </g>
      ))}
      <g fontSize="11">
        <g textAnchor="end"><text x="23" y="30">20</text><text x="23" y="124">10</text><text x="23" y="217">0</text></g>
        <text x="554" y="30">200</text><text x="554" y="124">100</text><text x="554" y="217">0</text>
      </g>
      <text transform="translate(587 148) rotate(-90)">cumulated</text>
      <rect x="600" y="34" width="87" height="21" rx="5" fill="#ccc" />
      <rect x="599" y="32" width="87" height="21" rx="5" fill="#f0f0f0" />
      <rect x="609" y="38" width="6" height="6" fill="#3333fa" />
      <text x="620" y="45">X10projet</text>
    </svg>
  );
}

function Report() {
  return (
    <section className="flex-1 bg-[#fafafa]">
      <div className="flex h-[30px] text-[13px] text-[#222]">
        <div className="w-[202px] bg-linear-to-b from-[#fafafa] to-[#dcdcdc] text-center leading-[31px] font-bold text-black">parameters</div>
        <p className="w-[400px] pt-[2px] pl-[17px] leading-[14px]">project : X10projet<br />year : 2016</p>
        <div className="flex flex-1 justify-center">
          <h2 className="h-[30px] w-[234px] border border-[#999] bg-linear-to-b from-[#b5b5b5] to-[#8b8b8b] text-center text-[19px] leading-[29px] font-bold whitespace-nowrap text-white [text-shadow:2px_2px_1px_#555]">Work plan per month</h2>
        </div>
        <p className="w-[165px] shrink-0 pr-4 text-right leading-[31px]">18/02/2016 12:03</p>
      </div>
      <div className="pt-[14px] pr-[43px] pl-[42px]">
        <div className="flex h-6 items-center text-[13px] text-[#222]">
          <span className="mr-[5px] flex size-6 items-center justify-center border border-[#aaa] bg-white">1</span>
          <span className="w-[122px]">real work</span>
          <span className="mr-[5px] flex size-6 items-center justify-center border border-[#aaa] bg-[#ffffdd] text-[#777] italic">1</span>
          <span className="w-[144px]">planned</span>
          <span className="font-bold text-black">unit for workload = days</span>
        </div>
        <WorkTable />
        <WorkChart />
      </div>
    </section>
  );
}

/* ---------- bottom ---------- */

function StatusBar() {
  const btn = "flex h-[31px] items-center rounded-md border border-white bg-linear-to-b from-[#c3c0e4] to-[#aaa8c8] text-black [text-shadow:1px_1px_1px_#fff]";
  return (
    <footer className="flex h-[34px] items-center border-b border-[#aaa] bg-linear-to-b from-[#8480c5] to-[#5b5785] pl-[1px]">
      <button className={`${btn} w-[120px] pl-[2px] text-xs`}><Ic n="plug" className="mr-[5px] size-6" />Disconnection</button>
      <Ic n="manager" className="mx-[5px] size-6" />
      <span className="w-[68px] text-xs font-bold text-[#eee]">manager</span>
      <button className={`${btn} w-[167px] pl-[3px] text-[13px]`}><Ic n="hmove" className="size-[22px]" /><span className="pl-[18px]">Hide menu</span></button>
      <button className={`${btn} ml-1 w-[167px] pl-[3px] text-[13px]`}><Ic n="vmove" className="size-[22px]" /><span className="pl-[18px]">Use switched mode</span></button>
      <strong className="flex-1 pr-[58px] pl-[26px] text-center text-base text-[#f0f0f5] [text-shadow:2px_2px_2px_#aaa8]">Project'Or RIA DEMO</strong>
      <button className={`${btn} mr-[2px] w-[112px] justify-between pr-1 pl-2 text-xs leading-[14px]`}><span>ProjeQtOr<br />V5.2.3</span><Ic n="q" className="size-[30px]" /></button>
    </footer>
  );
}

function Downloads() {
  return (
    <div className={`flex h-[45px] items-center bg-[#dfdfdf] pl-[3px] text-[11px] text-[#333] ${UI}`}>
      {[["pdf", "cv_ocharleux(2).pdf"], ["htmlFile", "CV O. Charleux - oc....html"]].map(([icon, name]) => (
        <div key={name} className="mr-[3px] flex h-[38px] w-[205px] rounded-sm border border-[#aaa] bg-linear-to-b from-[#eee] to-[#dedede]">
          <button className="flex flex-1 items-center pl-2"><Ic n={icon} className="mr-3 size-[17px]" />{name}</button>
          <button aria-label="Options" className="flex w-[14px] justify-center border-l border-[#aaa] pt-3"><svg viewBox="0 0 8 5" className="h-[4px] w-[6px]"><path d="M0 0h8L4 5z" fill="#555" /></svg></button>
        </div>
      ))}
      <div className="mr-[15px] ml-auto flex items-center">
        <svg viewBox="0 0 14 13" className="mr-[6px] h-[13px] w-[14px]"><path d="M5 0h4v4h3L7 9 2 4h3zM0 11h14v2H0z" fill="#555" /></svg>
        <a href="#" className="underline">Afficher tous les téléchargements...</a>
        <button aria-label="Close downloads" className="ml-5"><X size={9} strokeWidth={4} /></button>
      </div>
    </div>
  );
}

const apps: [string, string][] = [
  ["folder", "stack"], ["chrome", "active"], ["outlook", "stack"], ["excel", "open"], ["word", "open"], ["vlc", ""], ["notepad", "open"],
  ["paint", "stack"], ["ppt", "open"], ["calc", "open"], ["earth", "open"], ["sync", "open"], ["warn", "open"], ["picture", "open"],
];

function Taskbar() {
  const look: Record<string, string> = {
    "": "w-[58px]",
    open: "w-[58px] border border-[#777] bg-linear-to-br from-[#777] via-[#333] to-[#2a2a2a]",
    active: "w-[58px] border border-[#ddd] bg-linear-to-br from-[#ddd] via-[#999] to-[#bbb]",
    stack: "w-[52px] border border-[#777] bg-linear-to-br from-[#777] via-[#333] to-[#2a2a2a] shadow-[2px_0_0_#111,3px_0_0_#777,5px_0_0_#111,6px_0_0_#777] mr-[6px]",
  };
  return (
    <div className={`flex h-10 items-center border-t border-[#777] bg-[#131313] text-[11px] text-white ${UI}`}>
      <button aria-label="Start" className="ml-[9px]"><Ic n="win" className="size-9" /></button>
      <button aria-label="Internet Explorer" className="ml-[27px]"><Ic n="ie" className="size-[34px]" /></button>
      <div className="ml-4 flex gap-1">
        {apps.map(([n, kind]) => (
          <button key={n} aria-label={n} className={`flex h-[38px] items-center justify-center rounded-[2px] ${look[kind]}`}><Ic n={n} className="size-[31px]" /></button>
        ))}
      </div>
      <div className="ml-auto flex items-center">
        <span>Liens</span><span className="mb-1 ml-[10px]">FR</span>
        <svg viewBox="0 0 8 5" className="ml-4 h-[5px] w-2"><path d="M0 5h8L4 0z" fill="#fff" /></svg>
        <svg viewBox="0 0 16 16" className="ml-[13px] size-4"><path d="M2 1v15" stroke="#fff" strokeWidth="1.6" /><path d="M3 2h6v2h6l-2 3 1 2H8V8H3z" fill="#fff" /></svg>
        <svg viewBox="0 0 16 16" className="ml-[9px] size-4" fill="none" stroke="#fff" strokeWidth="1.6"><path d="M5 4h10v8H5zM8 15h6M10 12v3M1 1v4h4V1M3 5v5" /></svg>
        <svg viewBox="0 0 16 16" className="ml-[9px] size-4" fill="none" stroke="#fff"><path d="M1 5h2l4-4v14l-4-4H1z" fill="#fff" /><path d="M10 5v6M12 4c2 2 2 6 0 8M14 2c3 3 3 9 0 12" /></svg>
        <div className="mr-[14px] ml-4 text-center leading-[17px]">12:04<br />18/02/2016</div>
        <span className="h-[38px] w-[13px] border border-[#666] bg-linear-to-br from-[#777] to-[#111]" />
      </div>
    </div>
  );
}

export default function App() {
  return (
    <div className={`flex min-h-screen flex-col overflow-hidden bg-[#fafafa] ${SANS}`}>
      <TabStrip />
      <AddressBar />
      <MenuBar />
      <main className="flex flex-1 border-b border-[#999]">
        <Sidebar />
        <div className="flex w-[6px] shrink-0 flex-col items-center justify-center gap-[3px] border-r border-[#777] bg-[#ccc]">
          {[0, 1, 2, 3].map((i) => <span key={i} className="h-[3px] w-[2px] bg-white" />)}
        </div>
        <div className="flex min-w-0 flex-1 flex-col border-r border-[#999]">
          <div className="flex h-8 items-center border-t border-white bg-linear-to-b from-[#8480c5] to-[#5d598f] pl-[10px]">
            <Ic n="chart" className="mr-5 size-[26px]" />
            <h1 className="text-[19px] font-bold text-white [text-shadow:2px_2px_2px_#222]">Reports</h1>
          </div>
          <ReportPicker />
          <div className="flex h-[5px] items-center justify-center gap-[2px] border-t border-b-2 border-t-[#999] border-b-[#5a5680] bg-[#ccc]">
            {[0, 1, 2, 3, 4].map((i) => <span key={i} className="h-[2px] w-[3px] bg-white" />)}
          </div>
          <Report />
        </div>
      </main>
      <StatusBar />
      <Downloads />
      <Taskbar />
    </div>
  );
}
